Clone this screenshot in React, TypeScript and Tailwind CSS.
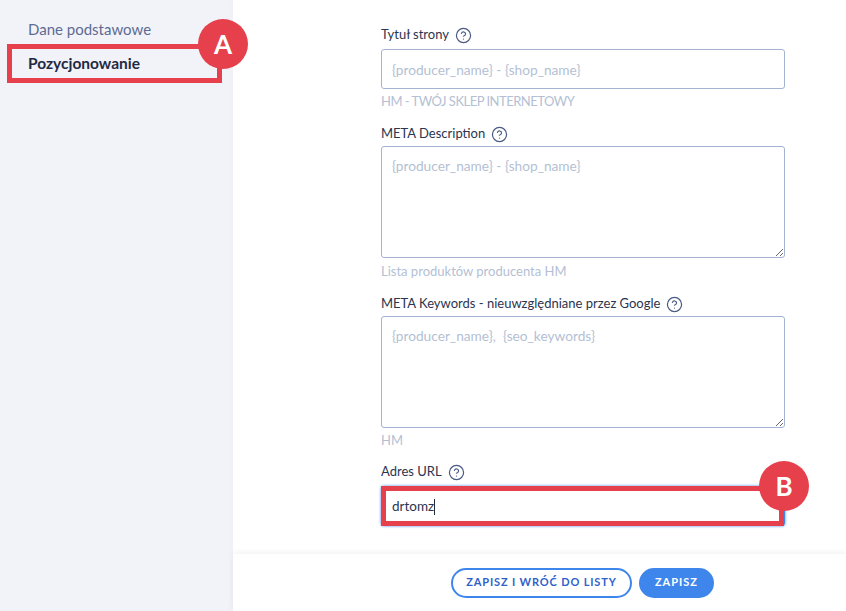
import { CircleHelp } from "lucide-react";

const fieldClass =
  "block w-full rounded-[3px] border border-[#a3b3d1] bg-white px-[10px] text-[13.7px] text-[#2b3550] outline-none placeholder:text-[#b4bfd4]";

function Label({ text }: { text: string }) {
  return (
    <div className="flex h-[20px] items-center gap-[6px] text-[13px] text-[#2b3550]">
      <span>{text}</span>
      <CircleHelp size={17} strokeWidth={1.7} className="text-[#4a5a85]" />
    </div>
  );
}

function Hint({ text, className }: { text: string; className: string }) {
  return <p className={`h-[20px] text-[13px] leading-[20px] text-[#b4bfd4] ${className}`}>{text}</p>;
}

function Marker({ letter, className }: { letter: string; className: string }) {
  return (
    <div
      className={`absolute flex h-[50px] w-[50px] items-center justify-center rounded-full bg-[#e5404b] text-[26px] font-bold text-white ${className}`}
    >
      {letter}
    </div>
  );
}

export default function App() {
  return (
    <div className="relative flex h-[611px] w-[846px] overflow-hidden bg-white font-['Lato',sans-serif]">
      <aside className="w-[233px] shrink-0 bg-[#f2f3f8] pl-[28px] pt-[19px] shadow-[inset_-4px_0_4px_rgba(0,0,0,0.012)]">
        <div className="flex h-[20px] items-center text-[15px] text-[#5d6b92]">Dane podstawowe</div>
        <div className="mt-[15px] flex h-[20px] items-center text-[15.5px] font-bold text-[#1f2a44]">Pozycjonowanie</div>
      </aside>

      <main className="flex flex-1 flex-col">
        <div className="flex-1 pl-[148px] pr-[61px] pt-[25px]">
          <Label text="Tytuł strony" />
          <input placeholder="{producer_name} - {shop_name}" className={`mt-[4px] h-[40px] ${fieldClass}`} />
          <Hint text="HM - TWÓJ SKLEP INTERNETOWY" className="mt-[2px] tracking-[-0.5px]" />

          <div className="mt-[13px]">
            <Label text="META Description" />
          </div>
          <textarea
            placeholder="{producer_name} - {shop_name}"
            className={`mt-[2px] h-[112px] py-[9px] ${fieldClass}`}
          />
          <Hint text="Lista produktów producenta HM" className="mt-[3px]" />

          <div className="mt-[13px]">
            <Label text="META Keywords - nieuwzględniane przez Google" />
          </div>
          <textarea
            placeholder="{producer_name},  {seo_keywords}"
            className={`mt-[2px] h-[112px] py-[9px] ${fieldClass}`}
          />
          <Hint text="HM" className="mt-[2px]" />

          <div className="mt-[12px]">
            <Label text="Adres URL" />
          </div>
          <div className="relative mt-[4px]">
            <input
              defaultValue="drtomz"
              className="block h-[40px] w-full rounded-[3px] border border-[#3f86ec] bg-white px-[10px] text-[13.5px] text-[#2b3550] shadow-[0_0_3px_#3f86ec] outline-none"
            />
            <span className="absolute left-[53px] top-[13px] h-[16px] w-px bg-[#1f2a44]" />
          </div>
        </div>

        <footer className="flex h-[57px] items-center justify-center gap-[7px] pl-[86px] shadow-[0_-2px_6px_rgba(0,0,0,0.05)]">
          <button className="h-[30px] w-[181px] rounded-full border-2 border-[#3f86ec] bg-white text-[11px] font-bold tracking-[0.85px] text-[#2f62c9]">
            ZAPISZ I WRÓĆ DO LISTY
          </button>
          <button className="h-[30px] w-[75px] rounded-full bg-[#3f86ec] text-[11px] font-bold tracking-[1px] text-white">
            ZAPISZ
          </button>
        </footer>
      </main>

      <div className="absolute left-[7px] top-[44px] h-[39px] w-[215px] border-[5px] border-[#e5404b]" />
      <Marker letter="A" className="left-[198px] top-[19px]" />
      <div className="absolute left-[381px] top-[486px] h-[40px] w-[403px] border-[5px] border-[#e5404b]" />
      <Marker letter="B" className="left-[759px] top-[461px]" />
    </div>
  );
}
